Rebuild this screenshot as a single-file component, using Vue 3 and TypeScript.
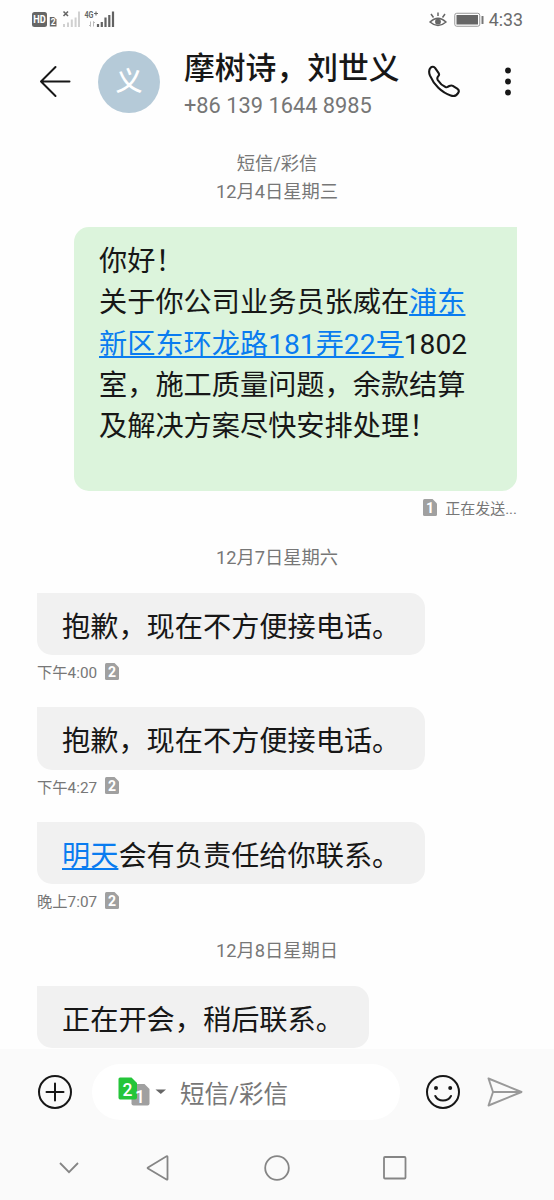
<script setup lang="ts">
interface Part {
  text: string
  link?: boolean
}
interface Message {
  id: number
  lines: Part[][]
  meta: string
  sim: number
  outgoing?: boolean
}
interface Day {
  date: string
  messages: Message[]
}

const contact = { name: '摩树诗，刘世义', initial: '义', phone: '+86 139 1644 8985' }

const days: Day[] = [
  {
    date: '12月4日星期三',
    messages: [
      {
        id: 1,
        outgoing: true,
        sim: 1,
        meta: '正在发送...',
        lines: [
          [{ text: '你好！' }],
          [{ text: '关于你公司业务员张威在' }, { text: '浦东', link: true }],
          [{ text: '新区东环龙路181弄22号', link: true }, { text: '1802' }],
          [{ text: '室，施工质量问题，余款结算' }],
          [{ text: '及解决方案尽快安排处理！' }],
        ],
      },
    ],
  },
  {
    date: '12月7日星期六',
    messages: [
      { id: 2, sim: 2, meta: '下午4:00', lines: [[{ text: '抱歉，现在不方便接电话。' }]] },
      { id: 3, sim: 2, meta: '下午4:27', lines: [[{ text: '抱歉，现在不方便接电话。' }]] },
      { id: 4, sim: 2, meta: '晚上7:07', lines: [[{ text: '明天', link: true }, { text: '会有负责任给你联系。' }]] },
    ],
  },
  {
    date: '12月8日星期日',
    messages: [{ id: 5, sim: 2, meta: '', lines: [[{ text: '正在开会，稍后联系。' }]] }],
  },
]
</script>

<template>
  <div class="screen">
    <div class="status">
      <svg class="signals" width="86" height="24" viewBox="0 0 86 24">
        <rect x="1" y="4" width="15" height="15" rx="2.500" fill="#666" />
        <text x="8.500" y="15.300" text-anchor="middle" font-size="10.500" font-weight="700" textLength="12.500" lengthAdjust="spacingAndGlyphs" fill="#fff">HD</text>
        <path d="M18.800 9h4.200l2.500 2.500V18.500H18.800z" fill="#666" />
        <text x="22.200" y="17" text-anchor="middle" font-size="8.500" font-weight="700" fill="#fff">2</text>
        <path d="M32.500 3.500l4.500 4.500M37 3.500l-4.500 4.500" stroke="#666" stroke-width="1.600" />
        <path d="M33 16v3M37 14.500V19M40.800 11.500V19M44.600 9.500V19M48 3.500V19" stroke="#d0d0d0" stroke-width="2" />
        <text x="53.500" y="10.300" font-size="9" font-weight="700" fill="#666" textLength="9" lengthAdjust="spacingAndGlyphs">4G</text>
        <path d="M63 5.500h4M65 3.500v4" stroke="#666" stroke-width="1.100" />
        <path d="M59.500 13.500v5l-1.500-1.500M62.500 18.500v-5l1.500 1.500" fill="none" stroke="#bbb" stroke-width="1" />
        <path d="M67 16v3M70.800 14V19M74.500 9.500V19M78.300 7V19M82 3.500V19" stroke="#626262" stroke-width="2.200" />
      </svg>
      <div class="status-right">
        <svg width="18" height="18" viewBox="0 0 18 18" fill="none" stroke="#666">
          <path d="M1 11Q9 3.500 17 11Q9 18 1 11Z" stroke-width="1.500" />
          <circle cx="9" cy="10.700" r="2.900" fill="#666" stroke="none" />
          <path d="M9 5V1.500M4.500 6.500L2 3M13.500 6.500L16 3" stroke-width="1.500" />
        </svg>
        <svg width="30" height="16" viewBox="0 0 30 16">
          <rect x="0.750" y="1.250" width="25" height="13" rx="2" fill="none" stroke="#999" />
          <rect x="2.500" y="3" width="21.500" height="9.500" fill="#666" />
          <rect x="27.500" y="4" width="2" height="8" rx="0.500" fill="#777" />
        </svg>
        <span>4:33</span>
      </div>
    </div>

    <header class="header">
      <svg class="back" width="34" height="34" viewBox="0 0 34 34" fill="none" stroke="#171717" stroke-width="2" stroke-linecap="round" stroke-linejoin="round">
        <path d="M31.500 16.500H3M17.500 2L3 16.500L17.500 31" />
      </svg>
      <div class="avatar">{{ contact.initial }}</div>
      <div class="who">
        <div class="name">{{ contact.name }}</div>
        <div class="phone">{{ contact.phone }}</div>
      </div>
      <svg class="call" width="34" height="34" viewBox="0 0 34 34" fill="none" stroke="#171717" stroke-width="2.100" stroke-linejoin="round">
        <path d="M3.800 2.600C5 1.400 7 1.500 8.200 3.100L11.500 7.800C12.300 9 12.200 10.300 11.200 11.300L10.700 12C10 13.100 10.200 14 10.900 15.200C12.900 18.400 15.600 20.700 18.500 22C19.500 22.400 20.200 22.300 20.900 21.700L22.300 21C23.500 20.400 24.800 20.300 25.800 20.900L30.200 23.700C31.800 24.800 32.200 26.400 31.200 27.900C29.500 30.800 26.600 31.500 23.700 30.500C14.500 27.600 6.800 19.600 3 10.700C1.700 7.400 1.800 4.600 3.800 2.600Z" />
      </svg>
      <svg class="more" width="8" height="30" viewBox="0 0 8 30" fill="#171717">
        <circle cx="4" cy="3.500" r="2.900" />
        <circle cx="4" cy="14.500" r="2.900" />
        <circle cx="4" cy="25.500" r="2.900" />
      </svg>
    </header>

    <main class="thread">
      <div class="kind">短信/彩信</div>
      <section v-for="day in days" :key="day.date" class="day">
        <div class="date">{{ day.date }}</div>
        <article v-for="m in day.messages" :key="m.id" class="message" :class="{ outgoing: m.outgoing }">
          <div class="bubble">
            <div v-for="(line, n) in m.lines" :key="n" class="line"><span v-for="(p, i) in line" :key="i" :class="{ link: p.link }">{{ p.text }}</span></div>
          </div>
          <div v-if="m.meta" class="meta">
            <span>{{ m.meta }}</span>
            <svg width="14" height="17" viewBox="0 0 14 17">
              <path d="M1.500 0H9.500L14 4.500V15.500Q14 17 12.500 17H1.500Q0 17 0 15.500V1.500Q0 0 1.500 0Z" fill="#a0a0a0" />
              <text x="7" y="13.600" text-anchor="middle" font-size="14" font-weight="700" fill="#fff">{{ m.sim }}</text>
            </svg>
          </div>
        </article>
      </section>
    </main>

    <footer class="footer">
      <div class="composer">
        <svg class="add" width="36" height="36" viewBox="0 0 36 36" fill="none" stroke="#171717" stroke-width="2" stroke-linecap="round">
          <circle cx="18" cy="18" r="16" />
          <path d="M18 9.500v17M9.500 18h17" />
        </svg>
        <div class="field">
          <svg width="50" height="30" viewBox="0 0 50 30">
            <path d="M15 7H26.500L31.500 12V26.500Q31.500 28.500 29.500 28.500H15.500Q13.500 28.500 13.500 26.500V7Z" fill="#a0a0a0" />
            <path d="M2 0.500H13.500L19 6V20.500Q19 22.500 17 22.500H2Q0.500 22.500 0.500 20.500V2Q0.500 0.500 2 0.500Z" fill="#25c53a" />
            <text x="9.500" y="19" text-anchor="middle" font-size="17.500" font-weight="500" fill="#fff">2</text>
            <text x="22" y="25.500" text-anchor="middle" font-size="17.500" font-weight="500" fill="#fff">1</text>
            <path d="M37.500 12.500H48L42.800 17Z" fill="#666" />
          </svg>
          <span>短信/彩信</span>
        </div>
        <svg class="smile" width="36" height="36" viewBox="0 0 36 36" fill="none" stroke="#171717" stroke-width="2" stroke-linecap="round">
          <circle cx="18" cy="18" r="16" />
          <circle cx="11" cy="14" r="2" fill="#171717" stroke="none" />
          <circle cx="25.200" cy="14" r="2" fill="#171717" stroke="none" />
          <path d="M10.300 22Q12.500 26.500 18 26.500Q23.700 26.500 26 22" />
        </svg>
        <svg class="send" width="36" height="30" viewBox="0 0 36 30" fill="none" stroke="#999" stroke-width="1.900" stroke-linejoin="round">
          <path d="M1.500 1.500L34.500 15L1.500 28.500L6 15ZM6 15H34" />
        </svg>
      </div>
      <nav class="nav">
        <svg width="20" height="26" viewBox="0 0 20 26"><path d="M1 8L10 17.200L19 8" /></svg>
        <svg width="24" height="26" viewBox="0 0 24 26"><path d="M21.500 2V24Q21.500 25 20.500 24.500L2 13.500Q1.200 13 2 12.500L20.500 1.300Q21.500 1 21.500 2Z" /></svg>
        <svg width="26" height="26" viewBox="0 0 26 26"><circle cx="13" cy="13" r="11.800" /></svg>
        <svg width="24" height="26" viewBox="0 0 24 26"><rect x="1" y="2" width="21.500" height="21.500" rx="1" /></svg>
      </nav>
    </footer>
  </div>
</template>

<style>
body {
  margin: 0;
  background: #fefefe;
}
</style>

<style scoped>
.screen {
  display: flex;
  flex-direction: column;
  width: 554px;
  height: 1200px;
  overflow: hidden;
  background: #fefefe;
  color: #171717;
  font-family: Roboto, "Noto Sans CJK SC", sans-serif;
}
svg {
  display: block;
  flex: none;
}
.status {
  display: flex;
  flex: none;
  justify-content: space-between;
  align-items: center;
  height: 40px;
  box-sizing: border-box;
  padding: 0 31px;
}
.status-right {
  display: flex;
  align-items: center;
  color: #6b6b6b;
  font-size: 17.800px;
  line-height: 24px;
}
.status-right svg {
  margin-right: 7px;
}
.status-right svg + svg {
  margin-right: 5px;
}
.header {
  display: flex;
  flex: none;
  align-items: center;
  height: 84px;
  padding-left: 38px;
}
.avatar {
  width: 62px;
  height: 62px;
  margin-left: 26px;
  border-radius: 50%;
  background: #b5cad8;
  color: #fff;
  font-size: 27px;
  font-weight: 500;
  line-height: 62px;
  text-align: center;
}
.who {
  width: 216px;
  margin-left: 25px;
  padding-top: 5px;
  white-space: nowrap;
}
.name {
  margin-left: -1px;
  font-size: 30.800px;
  font-weight: 500;
  line-height: 42px;
}
.phone {
  margin-left: -1px;
  color: #767676;
  font-size: 21.800px;
  line-height: 31px;
}
.call {
  margin-left: 26px;
}
.more {
  margin-left: 43px;
}
.thread {
  flex: 1;
  min-height: 0;
  overflow: hidden;
  padding: 26px 37px 0;
}
.kind,
.date {
  color: #777;
  font-size: 18.300px;
  line-height: 28px;
  text-align: center;
}
.day + .day {
  margin-top: 18.800px;
}
.date {
  margin-bottom: 21px;
}
.message {
  display: flex;
  flex-direction: column;
  align-items: flex-start;
}
.message + .message {
  margin-top: 20.300px;
}
.bubble {
  box-sizing: border-box;
  padding: 14px 25px 7px;
  border-radius: 0 15px 15px 15px;
  background: #f1f1f1;
  font-size: 28.200px;
  line-height: 41.300px;
  white-space: nowrap;
}
.line {
  height: 41.300px;
}
.outgoing {
  align-items: flex-end;
}
.outgoing .bubble {
  width: 443px;
  height: 264px;
  border-radius: 15px 0 15px 15px;
  background: #dcf4dc;
}
.link {
  color: #0a7cf0;
  text-decoration: underline;
  text-decoration-thickness: 1.500px;
  text-underline-offset: 2px;
}
.meta {
  display: flex;
  align-items: center;
  gap: 8px;
  height: 32px;
  color: #777;
  font-size: 15.300px;
}
.message:last-child .meta {
  margin-bottom: 2px;
}
.outgoing .meta {
  flex-direction: row-reverse;
  font-size: 15px;
}
.footer {
  flex: none;
  height: 151px;
  background: #fafafa;
}
.composer {
  display: flex;
  align-items: center;
  height: 86px;
  padding-left: 37px;
}
.field {
  display: flex;
  align-items: center;
  width: 308px;
  height: 56px;
  box-sizing: border-box;
  margin-left: 19px;
  padding-left: 26px;
  border-radius: 28px;
  background: #fff;
  color: #777;
  font-size: 24.500px;
}
.field span {
  margin-left: 12px;
}
.smile {
  margin-left: 25px;
}
.send {
  margin-left: 26px;
}
.nav {
  display: flex;
  align-items: center;
  height: 65px;
  padding-left: 59px;
  fill: none;
  stroke: #858585;
  stroke-width: 1.800;
}
.nav svg:nth-child(2) {
  margin-left: 67px;
}
.nav svg:nth-child(3) {
  margin-left: 94px;
}
.nav svg:nth-child(4) {
  margin-left: 93px;
}
</style>
